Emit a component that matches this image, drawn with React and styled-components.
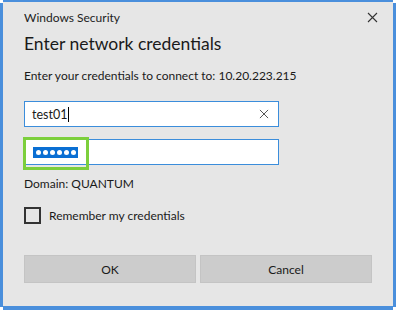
import React from "react";
import styled, { createGlobalStyle } from "styled-components";

const Global = createGlobalStyle`
  html, body {
    margin: 0;
    padding: 0;
    background: #e6e6e6;
  }
  body {
    font-family: Lato, "Noto Sans", sans-serif;
    color: #1a1a1a;
  }
`;

const Window = styled.div`
  box-sizing: border-box;
  width: 396px;
  height: 310px;
  background: #e6e6e6;
  border: 3px solid #4a8fdc;
  border-top-width: 2px;
  border-bottom-width: 4px;
  position: relative;
  display: flex;
  flex-direction: column;
  padding: 0 21px;
`;

const Corner = styled.span`
  position: absolute;
  width: 3px;
  height: 3px;
  background: #ffffff;
  ${(p) => (p.$top ? "top: -2px;" : "bottom: -4px;")}
  ${(p) => (p.$left ? "left: -3px;" : "right: -3px;")}
`;

const TitleBar = styled.div`
  display: flex;
  align-items: center;
  justify-content: space-between;
  height: 30px;
  font-size: 12px;
  color: #222;
`;

const Close = styled.svg`
  width: ${(p) => p.$size}px;
  height: ${(p) => p.$size}px;
  margin-right: ${(p) => p.$mr}px;
`;

const Heading = styled.h1`
  margin: -1px 0 0;
  font-size: 17.5px;
  font-weight: 400;
  line-height: 26px;
  color: #1a1a1a;
`;

const Prompt = styled.p`
  margin: 10px 0 0;
  font-size: 12px;
  line-height: 18px;
  color: #1a1a1a;
`;

const Field = styled.div`
  position: relative;
  box-sizing: border-box;
  width: 255px;
  height: 26px;
  margin-top: ${(p) => p.$mt}px;
  border: 1px solid #3b8ddb;
  background: #ffffff;
  display: flex;
  align-items: center;
  padding: 0 7px;
  font-size: 12.5px;
`;

const Value = styled.span`
  flex: 1;
  display: flex;
  align-items: center;
`;

const Caret = styled.span`
  display: inline-block;
  width: 1px;
  height: 15px;
  background: #000;
  margin-left: 1px;
`;

const Dots = styled.span`
  display: inline-flex;
  align-items: center;
  gap: 2px;
  height: 11px;
  margin-left: 1px;
  padding: 0 2px 0 3px;
  background: #0a6fd3;
`;

const Dot = styled.span`
  width: 5px;
  height: 5px;
  border-radius: 50%;
  background: #ffffff;
`;

const Highlight = styled.span`
  position: absolute;
  left: -2px;
  top: -3px;
  width: 66px;
  height: 33px;
  box-sizing: border-box;
  border: 3px solid #7ccf3c;
`;

const Domain = styled.div`
  margin-top: 11px;
  font-size: 12px;
  line-height: 16px;
`;

const CheckRow = styled.label`
  display: flex;
  align-items: center;
  gap: 8px;
  margin-top: 15px;
  font-size: 12px;
`;

const Box = styled.span`
  box-sizing: border-box;
  width: 17px;
  height: 17px;
  border: 2px solid #333;
  background: transparent;
`;

const Buttons = styled.div`
  display: grid;
  grid-template-columns: 172px 172px;
  gap: 4px;
  margin-top: 31px;
`;

const Button = styled.button`
  height: 28px;
  border: 1px solid #c4c4c4;
  background: #cccccc;
  font-family: inherit;
  font-size: 12px;
  color: #1a1a1a;
  padding: 0;
`;

const CrossIcon = ({ size, mr, color }) => (
  <Close viewBox="0 0 11 11" $size={size} $mr={mr}>
    <path d="M1 1 L10 10 M10 1 L1 10" stroke={color} strokeWidth="1.1" fill="none" />
  </Close>
);

export default function App() {
  return (
    <>
      <Global />
      <Window>
        <Corner $top $left />
        <Corner $top />
        <Corner $left />
        <Corner />
        <TitleBar>
          <span>Windows Security</span>
          <CrossIcon size={11} mr={-6} color="#333" />
        </TitleBar>
        <Heading>Enter network credentials</Heading>
        <Prompt>Enter your credentials to connect to: 10.20.223.215</Prompt>
        <Field $mt={16}>
          <Value>
            test01
            <Caret />
          </Value>
          <CrossIcon size={10} mr={2} color="#555" />
        </Field>
        <Field $mt={12}>
          <Value>
            <Dots>
              {[0, 1, 2, 3, 4, 5].map((i) => (
                <Dot key={i} />
              ))}
            </Dots>
          </Value>
          <Highlight />
        </Field>
        <Domain>Domain: QUANTUM</Domain>
        <CheckRow>
          <Box />
          Remember my credentials
        </CheckRow>
        <Buttons>
          <Button>OK</Button>
          <Button>Cancel</Button>
        </Buttons>
      </Window>
    </>
  );
}
